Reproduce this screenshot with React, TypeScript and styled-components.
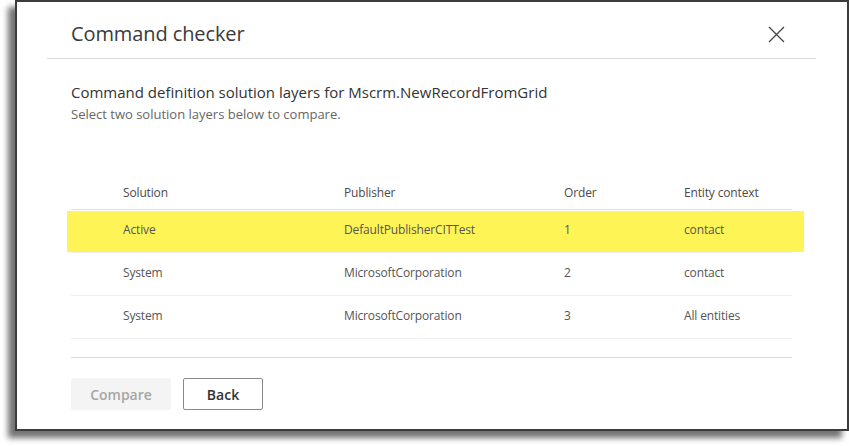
import React from "react";
import styled, { createGlobalStyle } from "styled-components";

const Global = createGlobalStyle`
  html, body { margin: 0; padding: 0; background: #ffffff; }
  body { font-family: "Open Sans", "Noto Sans", sans-serif; }
  #root { width: 849px; height: 446px; }
`;

const Stage = styled.div`
  width: 849px;
  height: 446px;
  padding: 0 0 0 15px;
  box-sizing: border-box;
  background: #ffffff;
`;

const Dialog = styled.div`
  width: 834px;
  height: 431px;
  box-sizing: border-box;
  border: 2px solid #3c3c3c;
  background: #ffffff;
  box-shadow: -7px 7px 6px rgba(0, 0, 0, 0.55);
  display: flex;
  flex-direction: column;
  padding: 0 31px 0 30px;
`;

const Header = styled.div`
  height: 57px;
  display: flex;
  align-items: center;
  justify-content: space-between;
  border-bottom: 1px solid #dcdcdc;
  padding: 0 31px 0 24px;
  box-sizing: border-box;
`;

const Title = styled.h1`
  margin: 0;
  font-size: 20px;
  font-weight: 400;
  color: #3a3a3a;
  letter-spacing: -0.1px;
  padding-top: 6px;
`;

const CloseButton = styled.button`
  border: none;
  background: none;
  padding: 0;
  width: 17px;
  height: 17px;
  margin-top: 8px;
  display: flex;
  align-items: center;
  justify-content: center;
  cursor: pointer;
`;

const Body = styled.div`
  padding: 23px 24px 0 24px;
  display: flex;
  flex-direction: column;
`;

const Heading = styled.div`
  font-size: 15px;
  color: #333333;
  line-height: 20px;
`;

const Sub = styled.div`
  font-size: 13px;
  color: #666666;
  line-height: 18px;
  margin-top: 3px;
`;

const Table = styled.div`
  margin-top: 57px;
  display: flex;
  flex-direction: column;
`;

const Row = styled.div<{ $head?: boolean; $highlight?: boolean }>`
  position: relative;
  display: grid;
  grid-template-columns: 52px 221px 220px 120px 1fr;
  align-items: center;
  height: ${(p) => (p.$head ? "30px" : "43px")};
  padding-bottom: 4px;
  border-bottom: 1px solid ${(p) => (p.$head ? "#e2e2e2" : "#efefef")};
  box-sizing: border-box;
  font-size: 12px;
  letter-spacing: -0.15px;
  color: ${(p) => (p.$head ? "#4a4a4a" : "#555555")};
  ${(p) =>
    p.$highlight
      ? `&::before {
          content: "";
          position: absolute;
          left: -4px;
          right: -12px;
          top: 1px;
          bottom: 0px;
          background: #fff455;
        }`
      : ""}
`;

const Cell = styled.div`
  position: relative;
  white-space: nowrap;
`;

const Footer = styled.div`
  margin: 18px 24px 0 24px;
  border-top: 1px solid #dcdcdc;
  padding-top: 20px;
  display: flex;
  gap: 12px;
`;

const Button = styled.button<{ $disabled?: boolean }>`
  height: 32px;
  box-sizing: border-box;
  font-family: "Open Sans", "Noto Sans", sans-serif;
  font-size: 14px;
  font-weight: 600;
  border-radius: 2px;
  padding: 0;
  cursor: ${(p) => (p.$disabled ? "default" : "pointer")};
  width: ${(p) => (p.$disabled ? "100px" : "80px")};
  background: ${(p) => (p.$disabled ? "#f4f4f4" : "#ffffff")};
  color: ${(p) => (p.$disabled ? "#a6a6a6" : "#333333")};
  border: ${(p) => (p.$disabled ? "none" : "1px solid #8a8a8a")};
`;

const rows = [
  { solution: "Active", publisher: "DefaultPublisherCITTest", order: "1", ctx: "contact", hl: true },
  { solution: "System", publisher: "MicrosoftCorporation", order: "2", ctx: "contact" },
  { solution: "System", publisher: "MicrosoftCorporation", order: "3", ctx: "All entities" },
];

export default function App() {
  return (
    <>
      <Global />
      <Stage>
        <Dialog>
          <Header>
            <Title>Command checker</Title>
            <CloseButton aria-label="Close">
              <svg width="17" height="17" viewBox="0 0 17 17">
                <path d="M1 1 L16 16 M16 1 L1 16" stroke="#444" strokeWidth="1.3" fill="none" />
              </svg>
            </CloseButton>
          </Header>
          <Body>
            <Heading>Command definition solution layers for Mscrm.NewRecordFromGrid</Heading>
            <Sub>Select two solution layers below to compare.</Sub>
            <Table>
              <Row $head>
                <Cell />
                <Cell>Solution</Cell>
                <Cell>Publisher</Cell>
                <Cell>Order</Cell>
                <Cell>Entity context</Cell>
              </Row>
              {rows.map((r, i) => (
                <Row key={i} $highlight={r.hl}>
                  <Cell />
                  <Cell>{r.solution}</Cell>
                  <Cell>{r.publisher}</Cell>
                  <Cell>{r.order}</Cell>
                  <Cell>{r.ctx}</Cell>
                </Row>
              ))}
            </Table>
          </Body>
          <Footer>
            <Button $disabled>Compare</Button>
            <Button>Back</Button>
          </Footer>
        </Dialog>
      </Stage>
    </>
  );
}
